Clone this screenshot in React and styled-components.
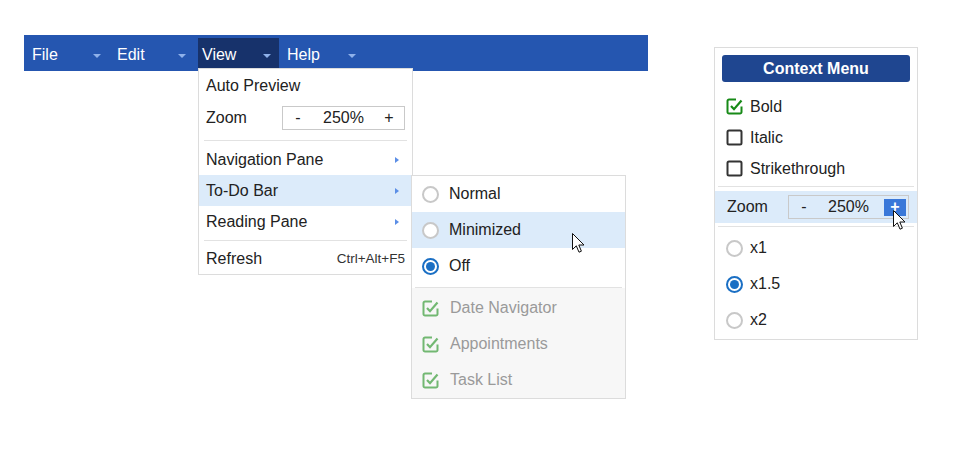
import React from 'react';
import styled, { createGlobalStyle } from 'styled-components';

const GlobalStyle = createGlobalStyle`
  body {
    margin: 0;
    background: #fff;
    font-family: "Liberation Sans", Arial, sans-serif;
    font-size: 16px;
    color: #222;
  }
`;

const Page = styled.div`
  position: relative;
  width: 963px;
  height: 450px;
  display: flex;
  align-items: flex-start;
  padding: 35px 0 0 24px;
  box-sizing: border-box;
`;

const MenuBar = styled.div`
  width: 624px;
  height: 36px;
  box-sizing: border-box;
  padding: 3px 0 0 4px;
  display: flex;
  gap: 4px;
  background: #2556b0;
`;

const BarItem = styled.div`
  position: relative;
  width: 81px;
  height: 33px;
  box-sizing: border-box;
  padding: 0 8px 0 4px;
  display: flex;
  align-items: center;
  justify-content: space-between;
  color: #fff;
  background: ${(p) => (p.$open ? '#17326b' : 'transparent')};
`;

const DownArrow = styled.span`
  width: 0;
  height: 0;
  border-left: 4px solid transparent;
  border-right: 4px solid transparent;
  border-top: 4px solid #8fb1ea;
  margin-top: 2px;
`;

const Dropdown = styled.div`
  position: absolute;
  top: 30px;
  left: 0;
  width: 215px;
  box-sizing: border-box;
  background: #fff;
  border: 1px solid #dcdcdc;
  padding-top: 1px;
  color: #222;
  z-index: 2;
`;

const Row = styled.div`
  position: relative;
  height: ${(p) => p.$h || 31}px;
  box-sizing: border-box;
  padding: 0 7px;
  display: flex;
  align-items: center;
  background: ${(p) => (p.$hot ? '#dcebfa' : 'transparent')};
  color: ${(p) => (p.$disabled ? '#9a9a9a' : '#222')};
`;

const Grow = styled.span`
  flex: 1;
`;

const Shortcut = styled.span`
  font-size: 13.5px;
  color: #333;
`;

const RightArrow = styled.span`
  width: 0;
  height: 0;
  border-top: 3.5px solid transparent;
  border-bottom: 3.5px solid transparent;
  border-left: 4px solid #5b8ee6;
  margin-right: 6px;
`;

const Separator = styled.div`
  height: 1px;
  background: #e2e2e2;
  margin: ${(p) => p.$m || '4px 5px'};
`;

const ZoomBox = styled.div`
  margin-left: auto;
  width: ${(p) => p.$w}px;
  height: ${(p) => p.$ht}px;
  box-sizing: border-box;
  border: 1px solid #c9c9c9;
  display: flex;
  align-items: center;
  background: ${(p) => (p.$tint ? 'transparent' : '#fff')};
`;

const ZoomBtn = styled.span`
  width: 30px;
  text-align: center;
`;

const ZoomPlus = styled.span`
  width: ${(p) => (p.$active ? 22 : 30)}px;
  height: ${(p) => (p.$active ? 17 : 20)}px;
  margin-right: ${(p) => (p.$active ? 2 : 0)}px;
  margin-left: ${(p) => (p.$active ? 6 : 0)}px;
  display: flex;
  align-items: center;
  justify-content: center;
  background: ${(p) => (p.$active ? '#3a78d9' : 'transparent')};
  color: ${(p) => (p.$active ? '#fff' : '#222')};
  font-weight: ${(p) => (p.$active ? 'bold' : 'normal')};
`;

const ZoomValue = styled.span`
  flex: 1;
  text-align: center;
`;

const SubMenu = styled.div`
  position: absolute;
  top: 0;
  left: 100%;
  width: 215px;
  box-sizing: border-box;
  background: #fff;
  border: 1px solid #dcdcdc;
  margin-left: -1px;
  z-index: 3;
`;

const SubRow = styled(Row)`
  height: 36px;
  padding: 0 10px;
  gap: ${(p) => p.$gap || 10}px;
`;

const GraySection = styled.div`
  background: #f7f7f7;
  padding-top: 2px;
`;

const Radio = styled.span`
  width: 17px;
  height: 17px;
  box-sizing: border-box;
  border-radius: 50%;
  border: 2px solid ${(p) => (p.$checked ? '#1a6fc4' : '#c8c8c8')};
  display: flex;
  align-items: center;
  justify-content: center;
  background: #fff;

  &::after {
    content: '';
    width: 9px;
    height: 9px;
    border-radius: 50%;
    background: ${(p) => (p.$checked ? '#1a6fc4' : 'transparent')};
  }
`;

const CheckSvg = styled.svg`
  width: 17px;
  height: 17px;
  flex-shrink: 0;
`;

const CheckIcon = ({ color, checked = true }) => (
  <CheckSvg viewBox="0 0 17 17">
    {checked ? (
      <>
        <path
          d="M10 1.5 H3 a1.5 1.5 0 0 0 -1.5 1.5 V14 a1.5 1.5 0 0 0 1.5 1.5 H14 a1.5 1.5 0 0 0 1.5 -1.5 V8.5"
          fill="none"
          stroke={color}
          strokeWidth="2"
        />
        <path d="M5 8 L8 11.2 L15.5 2.5" fill="none" stroke={color} strokeWidth="2.2" />
      </>
    ) : (
      <rect x="1.5" y="1.5" width="14" height="14" rx="1.5" fill="none" stroke={color} strokeWidth="2" />
    )}
  </CheckSvg>
);

const ContextMenu = styled.div`
  margin: 12px 0 0 66px;
  width: 204px;
  box-sizing: border-box;
  border: 1px solid #dcdcdc;
  background: #fff;
  padding: 7px 0 1px;
`;

const ContextTitle = styled.div`
  margin: 0 7px 9px;
  height: 27px;
  border-radius: 3px;
  background: #1f4690;
  color: #fff;
  font-weight: bold;
  display: flex;
  align-items: center;
  justify-content: center;
`;

const CtxRow = styled(Row)`
  padding: ${(p) => p.$pad || '0 11px'};
  gap: 7px;
`;

const Cursor = styled.svg`
  position: absolute;
  left: ${(p) => p.$x}px;
  top: ${(p) => p.$y}px;
  width: 14px;
  height: 21px;
  z-index: 10;
  pointer-events: none;
`;

const Pointer = ({ x, y }) => (
  <Cursor $x={x} $y={y} viewBox="0 0 14 21">
    <path
      d="M0.5 0.5 V16.5 L4.3 12.8 L7 19.2 L9.4 18.2 L6.8 12 H12 Z"
      fill="#fff"
      stroke="#111"
      strokeWidth="1"
      strokeLinejoin="round"
    />
  </Cursor>
);

const Zoom = ({ w, h, active, tint }) => (
  <ZoomBox $w={w} $ht={h} $tint={tint}>
    <ZoomBtn>-</ZoomBtn>
    <ZoomValue>250%</ZoomValue>
    <ZoomPlus $active={active}>+</ZoomPlus>
  </ZoomBox>
);

const barItems = ['File', 'Edit', 'View', 'Help'];

export default function App() {
  return (
    <>
      <GlobalStyle />
      <Page>
        <MenuBar>
          {barItems.map((name) => (
            <BarItem key={name} $open={name === 'View'}>
              <span>{name}</span>
              <DownArrow />
              {name === 'View' && (
                <Dropdown>
                  <Row>Auto Preview</Row>
                  <Row $h={34}>
                    Zoom
                    <Zoom w={123} h={24} />
                  </Row>
                  <Separator $m="5px 5px 3px" />
                  <Row>
                    <Grow>Navigation Pane</Grow>
                    <RightArrow />
                  </Row>
                  <Row $hot>
                    <Grow>To-Do Bar</Grow>
                    <RightArrow />
                    <SubMenu>
                      <SubRow>
                        <Radio />
                        Normal
                      </SubRow>
                      <SubRow $hot>
                        <Radio />
                        Minimized
                      </SubRow>
                      <SubRow>
                        <Radio $checked />
                        Off
                      </SubRow>
                      <Separator $m="3px 3px 0" />
                      <GraySection>
                        {['Date Navigator', 'Appointments', 'Task List'].map((t) => (
                          <SubRow key={t} $disabled $gap={11}>
                            <CheckIcon color="#72b872" />
                            {t}
                          </SubRow>
                        ))}
                      </GraySection>
                    </SubMenu>
                  </Row>
                  <Row>
                    <Grow>Reading Pane</Grow>
                    <RightArrow />
                  </Row>
                  <Separator $m="3px 5px 2px" />
                  <Row>
                    <Grow>Refresh</Grow>
                    <Shortcut>Ctrl+Alt+F5</Shortcut>
                  </Row>
                </Dropdown>
              )}
            </BarItem>
          ))}
        </MenuBar>

        <ContextMenu>
          <ContextTitle>Context Menu</ContextTitle>
          <CtxRow>
            <CheckIcon color="#178a17" />
            Bold
          </CtxRow>
          <CtxRow>
            <CheckIcon color="#333" checked={false} />
            Italic
          </CtxRow>
          <CtxRow>
            <CheckIcon color="#333" checked={false} />
            Strikethrough
          </CtxRow>
          <Separator $m="2px 3px 4px" />
          <CtxRow $hot $h={32} $pad="0 8px 0 12px">
            Zoom
            <Zoom w={121} h={24} active tint />
          </CtxRow>
          <Separator $m="3px 3px 3px" />
          {['x1', 'x1.5', 'x2'].map((t) => (
            <CtxRow key={t} $h={36}>
              <Radio $checked={t === 'x1.5'} />
              {t}
            </CtxRow>
          ))}
        </ContextMenu>

        <Pointer x={572} y={233} />
        <Pointer x={893} y={210} />
      </Page>
    </>
  );
}
